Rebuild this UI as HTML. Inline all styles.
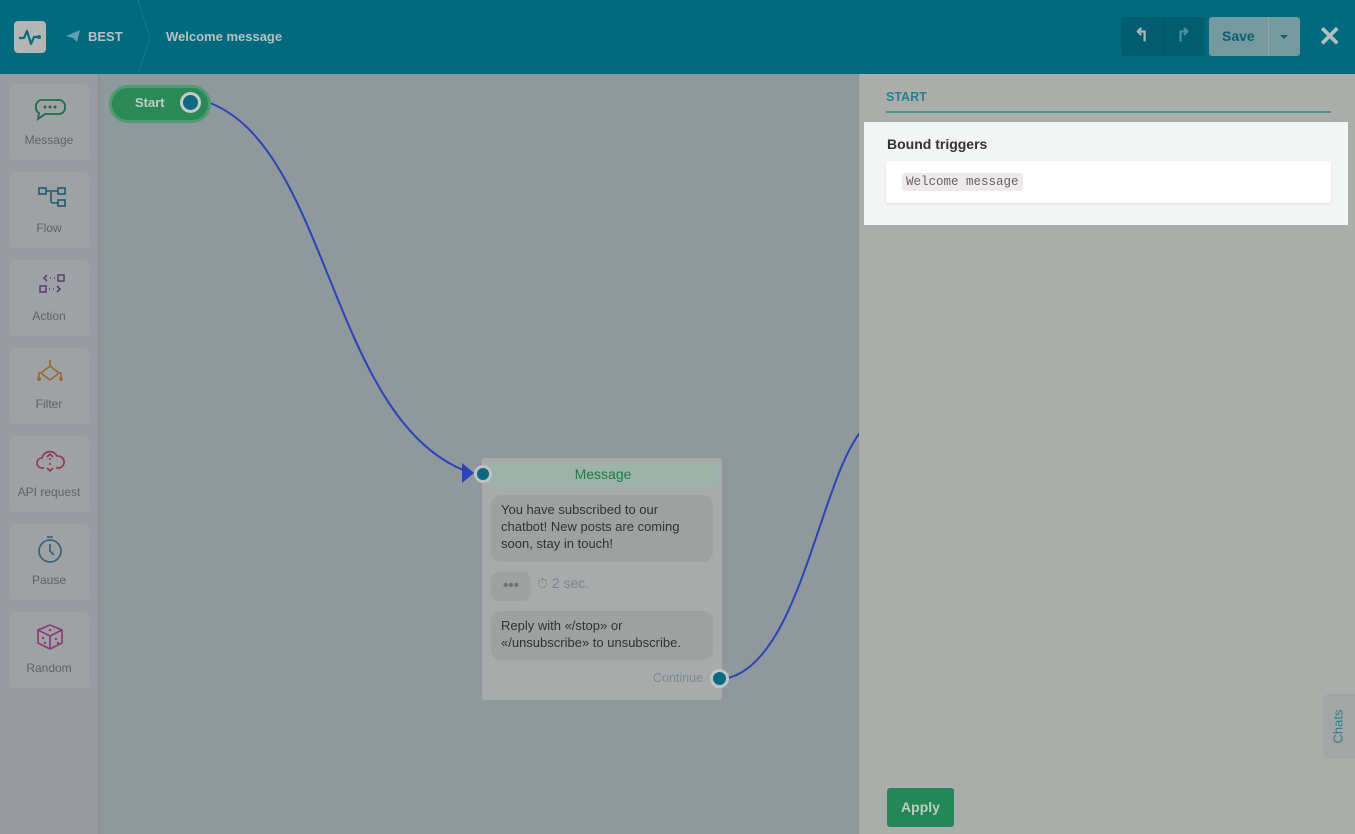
<!DOCTYPE html>
<html><head><meta charset="utf-8"><style>
*{box-sizing:border-box;margin:0;padding:0}
body{width:1355px;height:834px;overflow:hidden;font-family:"Liberation Sans",sans-serif;background:#8f989c;position:relative}
.hdr{position:absolute;left:0;top:0;width:1355px;height:74px;background:#006a7f}
.logo{position:absolute;left:14px;top:21px;width:32px;height:32px;background:#b4b6b6;border-radius:4px}
.crumb{position:absolute;top:29px;color:#b9c0c2;font-size:14px;font-weight:bold}
.side{position:absolute;left:0;top:74px;width:100px;height:760px;background:#989ca0;border-right:2px solid #8c9094}
.tile{position:absolute;left:9px;width:80px;height:76px;background:#9fa2a5;border-radius:5px;text-align:center;font-size:12px;color:#5e6366}
.tile svg{position:absolute;left:24px;top:10px}
.tile span{position:absolute;left:0;right:0;top:49px}
.panel{position:absolute;left:859px;top:74px;width:496px;height:760px;background:#abadab}
.btn{position:absolute;border-radius:3px}
</style></head><body>
<div class="hdr">
 <div class="logo"><svg width="32" height="32" viewBox="0 0 32 32"><path d="M5 17h5l3-7 4 13 3-7h5" fill="none" stroke="#0f6a7c" stroke-width="2.2" stroke-linejoin="round"/><circle cx="25" cy="16" r="2" fill="#0f6a7c"/></svg></div>
 <svg style="position:absolute;left:66px;top:30px" width="14" height="12" viewBox="0 0 14 12"><path d="M0 6L14 0 11 12 7 8z" fill="#5f9fb0"/></svg>
 <div class="crumb" style="left:88px;font-size:13px">BEST</div>
 <svg style="position:absolute;left:136px;top:0" width="16" height="74"><path d="M2 0L14 37 2 74" fill="none" stroke="#0d7b90" stroke-width="1"/></svg>
 <div class="crumb" style="left:166px;font-size:13px">Welcome message</div>
 <div class="btn" style="left:1121px;top:17px;width:84px;height:39px;background:#005c6f"></div>
 <div style="position:absolute;left:1163px;top:17px;width:1px;height:39px;background:#00566a"></div>
 <div style="position:absolute;left:1134px;top:25px;color:#a8b6b9;font-size:18px;font-weight:bold">↰</div>
 <div style="position:absolute;left:1176px;top:25px;color:#4d8f9d;font-size:18px;font-weight:bold">↱</div>
 <div class="btn" style="left:1209px;top:17px;width:91px;height:39px;background:#74999f"></div>
 <div style="position:absolute;left:1268px;top:17px;width:1px;height:39px;background:#a39f8f"></div>
 <div style="position:absolute;left:1222px;top:28px;color:#0f5f70;font-size:14px;font-weight:bold">Save</div>
 <div style="position:absolute;left:1280px;top:35px;border:4px solid transparent;border-top:4px solid #0f5f70"></div>
 <div style="position:absolute;left:1318px;top:20px;color:#b5bfc0;font-size:28px;font-weight:bold">✕</div>
</div>
<div class="side">
 <div class="tile" style="top:10px"><svg width="34" height="30" viewBox="0 0 34 30"><path d="M8 6h18a6 6 0 0 1 6 6v2a6 6 0 0 1-6 6H12l-7 5 1-6a6 6 0 0 1-3-5v-2a6 6 0 0 1 5-6z" fill="none" stroke="#1b6e48" stroke-width="1.8"/><circle cx="12" cy="13" r="1.5" fill="#1b6e48"/><circle cx="17" cy="13" r="1.5" fill="#1b6e48"/><circle cx="22" cy="13" r="1.5" fill="#1b6e48"/></svg><span>Message</span></div>
 <div class="tile" style="top:98px"><svg width="34" height="30" viewBox="0 0 34 30"><rect x="6" y="6" width="7" height="6" fill="none" stroke="#245a72" stroke-width="1.6"/><rect x="25" y="6" width="7" height="6" fill="none" stroke="#245a72" stroke-width="1.6"/><rect x="25" y="18" width="7" height="6" fill="none" stroke="#245a72" stroke-width="1.6"/><path d="M13 9h12M18 9v10a2 2 0 0 0 2 2h5" fill="none" stroke="#245a72" stroke-width="1.6"/></svg><span>Flow</span></div>
 <div class="tile" style="top:186px"><svg width="34" height="30" viewBox="0 0 34 30"><path d="M14 5l-3 3 3 3M17 8h1M21 8h1M16 19h1M20 19h1M24 16l3 3-3 3" fill="none" stroke="#5f4178" stroke-width="1.6"/><rect x="25" y="5" width="6" height="6" fill="none" stroke="#5f4178" stroke-width="1.6"/><rect x="7" y="16" width="6" height="6" fill="none" stroke="#5f4178" stroke-width="1.6"/></svg><span>Action</span></div>
 <div class="tile" style="top:274px"><svg width="34" height="30" viewBox="0 0 34 30"><path d="M17 2v6M17 8l-9 7 9 7 9-7zM8 15H6v5M26 15h2v5" fill="none" stroke="#9a6a30" stroke-width="1.6"/><circle cx="6" cy="21" r="2" fill="#9a6a30"/><circle cx="28" cy="21" r="2" fill="#9a6a30"/></svg><span>Filter</span></div>
 <div class="tile" style="top:362px"><svg width="34" height="30" viewBox="0 0 34 30"><path d="M11 22H9a5 5 0 0 1 0-10 8 8 0 0 1 15-2 6 6 0 0 1 2 12h-3" fill="none" stroke="#8c3c4c" stroke-width="1.6"/><path d="M17 12v2M17 17v2M14 22l3 3 3-3M14 11l3-3 3 3" fill="none" stroke="#8c3c4c" stroke-width="1.6"/></svg><span>API request</span></div>
 <div class="tile" style="top:450px"><svg width="34" height="30" viewBox="0 0 34 30"><circle cx="17" cy="17" r="11" fill="none" stroke="#3f6479" stroke-width="1.8"/><path d="M14 3h6M17 10v7l4 4" fill="none" stroke="#3f6479" stroke-width="1.8"/></svg><span>Pause</span></div>
 <div class="tile" style="top:538px"><svg width="34" height="30" viewBox="0 0 34 30"><path d="M17 3l12 5v13l-12 6-12-6V8zM5 8l12 6 12-6M17 14v13" fill="none" stroke="#8c3c78" stroke-width="1.7"/><circle cx="17" cy="8" r="1.3" fill="#8c3c78"/><circle cx="10" cy="16" r="1.2" fill="#8c3c78"/><circle cx="12" cy="21" r="1.2" fill="#8c3c78"/><circle cx="23" cy="17" r="1.2" fill="#8c3c78"/><circle cx="25" cy="21" r="1.2" fill="#8c3c78"/></svg><span>Random</span></div>
</div>
<svg style="position:absolute;left:0;top:0" width="1355" height="834"><path d="M210 103 C330 150 330 420 468 472" fill="none" stroke="#2c44b8" stroke-width="2"/><path d="M462 463l12 10-12 10z" fill="#2c44b8"/><path d="M728 678 C800 660 820 480 862 430" fill="none" stroke="#2c44b8" stroke-width="2"/></svg>
<div style="position:absolute;left:109px;top:85px;width:102px;height:38px;border-radius:19px;background:#2a8a57;border:3px solid #4d9a73"></div>
<div style="position:absolute;left:135px;top:95px;color:#c2cfc6;font-size:13px;font-weight:bold">Start</div>
<div style="position:absolute;left:180px;top:92px;width:21px;height:21px;border-radius:50%;background:#0b6a80;border:3px solid #c5c9c9"></div>
<div style="position:absolute;left:482px;top:458px;width:240px;height:242px;background:#a9abab;border-radius:3px"></div>
<div style="position:absolute;left:487px;top:462px;width:232px;height:25px;background:#9db3aa;text-align:center;color:#1e7a4a;font-size:14px;line-height:25px">Message</div>
<div style="position:absolute;left:474px;top:465px;width:18px;height:18px;border-radius:50%;background:#0b6a80;border:3px solid #bfc3c3"></div>
<div style="position:absolute;left:491px;top:495px;width:222px;height:67px;background:#9fa1a1;border-radius:10px;padding:6px 20px 0 10px;font-size:13px;line-height:17px;color:#303234">You have subscribed to our chatbot! New posts are coming soon, stay in touch!</div>
<div style="position:absolute;left:491px;top:572px;width:40px;height:29px;background:#9fa1a1;border-radius:8px;color:#6c7274;text-align:center;line-height:28px;font-size:15px;font-weight:bold">•••</div>
<div style="position:absolute;left:537px;top:575px;color:#788790;font-size:14px">⏱ 2 sec.</div>
<div style="position:absolute;left:491px;top:611px;width:222px;height:49px;background:#9fa1a1;border-radius:10px;padding:6px 10px;font-size:13px;line-height:17px;color:#303234">Reply with «/stop» or «/unsubscribe» to unsubscribe.</div>
<div style="position:absolute;left:653px;top:671px;color:#7c8b93;font-size:12.5px">Continue</div>
<div style="position:absolute;left:710px;top:669px;width:19px;height:19px;border-radius:50%;background:#0b6a80;border:3px solid #c1c4c4"></div>
<div class="panel">
 <div style="position:absolute;left:27px;top:16px;color:#22828e;font-size:12.5px;font-weight:bold">START</div>
 <div style="position:absolute;left:27px;top:37px;width:445px;height:2px;background:#4c9093"></div>
 <div style="position:absolute;left:5px;top:48px;width:484px;height:103px;background:#f3f4f4"></div>
 <div style="position:absolute;left:28px;top:62px;color:#333;font-size:14px;font-weight:bold">Bound triggers</div>
 <div style="position:absolute;left:27px;top:87px;width:445px;height:42px;background:#fff;border-radius:3px;box-shadow:0 1px 2px #ddd"></div>
 <div style="position:absolute;left:43px;top:99px;background:#eceaea;border-radius:3px;padding:2px 4px;font-family:'Liberation Mono',monospace;font-size:12.5px;color:#6b6161">Welcome message</div>
 <div style="position:absolute;left:28px;top:714px;width:67px;height:39px;background:#238855;border-radius:3px;color:#bccdc2;font-size:14px;font-weight:bold;text-align:center;line-height:39px">Apply</div>
 <div style="position:absolute;left:464px;top:620px;width:40px;height:65px;background:#a4a6a6;border-radius:6px"></div>
 <div style="position:absolute;left:461px;top:645px;color:#2e7f8c;font-size:13px;transform:rotate(-90deg);transform-origin:center;width:36px;text-align:center">Chats</div>
</div>
</body></html>
